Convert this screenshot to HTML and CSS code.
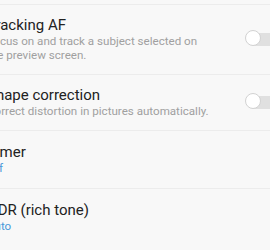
FILE: index.html
```html
<!DOCTYPE html>
<html lang="en">
<head>
  <meta charset="UTF-8" />
  <title>Camera settings</title>
  <link rel="stylesheet" href="styles.css">
</head>
<body>

  <div class="settings">

    <div class="row">
      <div class="text">
        <div class="title">Tracking AF</div>
        <div class="desc">Focus on and track a subject selected on the preview screen.</div>
      </div>
      <div class="switch"><span class="thumb"></span></div>
    </div>

    <div class="row">
      <div class="text">
        <div class="title">Shape correction</div>
        <div class="desc">Correct distortion in pictures automatically.</div>
      </div>
      <div class="switch"><span class="thumb"></span></div>
    </div>

    <div class="row single">
      <div class="text">
        <div class="title">Timer</div>
        <div class="value">Off</div>
      </div>
    </div>

    <div class="row single">
      <div class="text">
        <div class="title">HDR (rich tone)</div>
        <div class="value">Auto</div>
      </div>
    </div>

  </div>

</body>
</html>
```

FILE: styles.css
```css
body {
  margin: 0;
  background-color: #f8f8f8;
  font-family: Roboto, "Noto Sans", sans-serif;
  overflow: hidden;
}
.settings {
  margin-top: 4px;
  margin-left: -13px;
  width: 300px;
}
.row {
  display: flex;
  align-items: center;
  border-top: 1px solid #ececec;
  padding: 11px 0 12px 0;
}
.row.single {
  padding: 12px 0 12px 0;
}
.text {
  width: 225px;
}
.title {
  font-size: 15px;
  line-height: 18px;
  color: #222222;
}
.desc {
  font-size: 11.6px;
  line-height: 14px;
  color: #a0a0a0;
}
.value {
  font-size: 11.6px;
  line-height: 15px;
  color: #4a98d8;
}
.switch {
  margin-left: 36px;
  width: 36px;
  height: 13px;
  background-color: #e0e0e0;
  border-radius: 7px;
  position: relative;
}
.thumb {
  position: absolute;
  left: -3px;
  top: -3px;
  width: 14px;
  height: 14px;
  border: 1.5px solid #d2d2d2;
  border-radius: 50%;
  background-color: #ffffff;
}
```
